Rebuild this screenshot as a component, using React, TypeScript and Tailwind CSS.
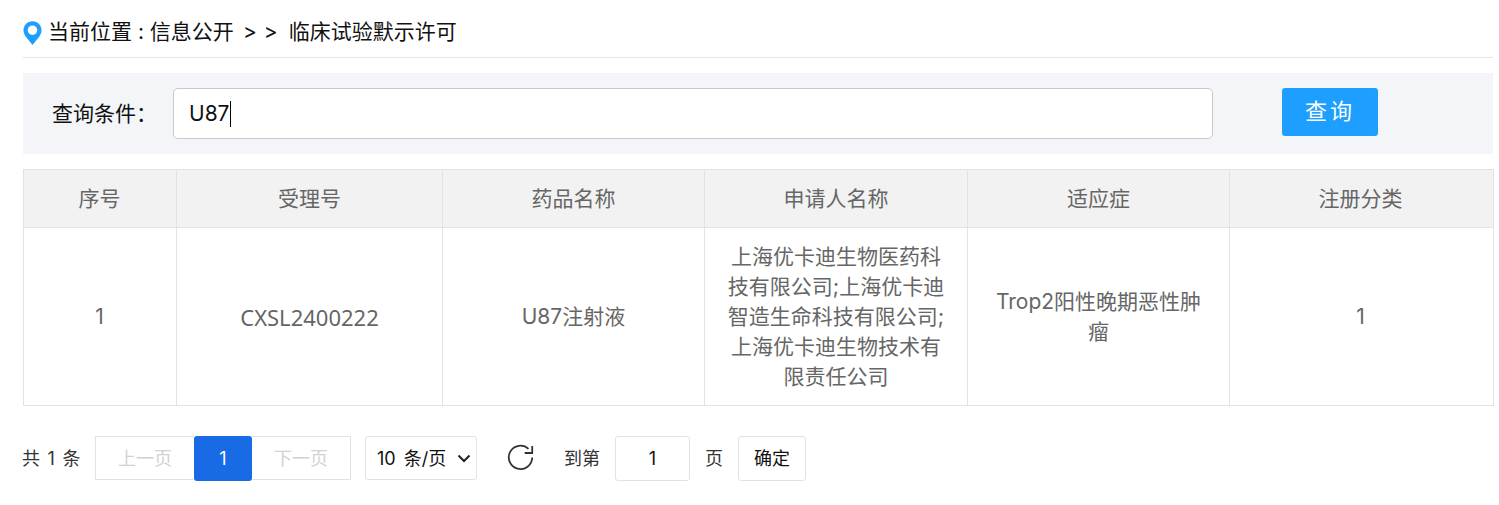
import React from 'react';

const FONT = "font-['Inter','Noto_Sans_CJK_SC',sans-serif]";

const columns = [
  { title: '序号', width: 'w-[153px]', pad: 'pr-px' },
  { title: '受理号', width: 'w-[266px]', pad: '' },
  { title: '药品名称', width: 'w-[262px]', pad: '' },
  { title: '申请人名称', width: 'w-[263px]', pad: '' },
  { title: '适应症', width: 'w-[262px]', pad: '' },
  { title: '注册分类', width: 'w-[264px]', pad: 'pr-[2px]' },
];

const PinIcon = () => (
  <svg width="19" height="26" viewBox="0 0 20 26" className="shrink-0 mt-[1px]">
    <path
      d="M10 .5C4.700.5.500 4.700.500 10c0 3.200 1.500 5.600 3.500 8.200L10 25.500l6-7.300c2-2.600 3.500-5 3.500-8.200C19.500 4.700 15.300.5 10 .5z"
      fill="#1e9fff"
    />
    <circle cx="10" cy="10" r="5" fill="#fff" />
  </svg>
);

const RefreshIcon = () => (
  <svg width="28" height="28" viewBox="0 0 28 28" fill="none" stroke="#333" strokeWidth="1.800">
    <path d="M25.200 13.500a11.700 11.700 0 1 1-3.700-8.700" />
    <path d="M25.200 2v7h-7.500" />
  </svg>
);

export default function App() {
  return (
    <div className={`${FONT} w-[1499px] h-[505px] bg-white pl-[23px] pr-[6px] overflow-hidden`}>
      {/* breadcrumb */}
      <div className="h-[58px] pt-[19px] border-b border-[#e6e6e6] flex items-start text-[21px] leading-[26px] text-[#111]">
        <PinIcon />
        <span className="ml-[6px] whitespace-pre">
          当前位置 : 信息公开
          <span className="ml-[9px]">&gt;</span>
          <span className="ml-[7px]">&gt;</span>
          <span className="ml-[11px]">临床试验默示许可</span>
        </span>
      </div>

      {/* search */}
      <div className="mt-[15px] h-[81px] bg-[#f4f5f9] flex items-start pt-[15px]">
        <label className="ml-[29px] w-[121px] h-[51px] flex items-center text-[21px] text-[#111]">查询条件：</label>
        <div className="w-[1040px] h-[51px] bg-white border border-[#c9c9c9] rounded-[5px] flex items-center pl-[15px] text-[21px] text-[#111]">
          U87<span className="w-px h-[26px] bg-black" />
        </div>
        <button className="ml-[69px] w-[96px] h-[48px] pb-[2px] rounded-[3px] bg-[#1e9fff] text-white text-[22px] tracking-[3px]">查询</button>
      </div>

      {/* table */}
      <table className="mt-[15px] w-[1470px] table-fixed border-collapse text-[21px] text-[#666] text-center">
        <colgroup>
          {columns.map((c) => (
            <col key={c.title} className={c.width} />
          ))}
        </colgroup>
        <thead>
          <tr className="h-[58px] bg-[#f2f2f2]">
            {columns.map((c) => (
              <th key={c.title} className={`border border-[#e2e2e2] font-normal ${c.pad}`}>{c.title}</th>
            ))}
          </tr>
        </thead>
        <tbody>
          <tr className="h-[178px] leading-[30px]">
            <td className="border border-[#e2e2e2] pr-px">1</td>
            <td className="border border-[#e2e2e2] font-['Noto_Sans',sans-serif] text-[22px]">CXSL2400222</td>
            <td className="border border-[#e2e2e2]">U87注射液</td>
            <td className="border border-[#e2e2e2] px-[21px]">上海优卡迪生物医药科技有限公司;上海优卡迪智造生命科技有限公司;上海优卡迪生物技术有限责任公司</td>
            <td className="border border-[#e2e2e2] px-[25px]">Trop2阳性晚期恶性肿瘤</td>
            <td className="border border-[#e2e2e2] pr-[2px]">1</td>
          </tr>
        </tbody>
      </table>

      {/* pagination */}
      <div className="mt-[30px] flex items-start h-[45px] text-[18px] text-[#333]">
        <span className="w-[72px] h-[44px] flex items-center -ml-px whitespace-pre [word-spacing:2.5px]">共 1 条</span>
        <div className="ml-px flex items-start">
          <span className="w-[99px] h-[44px] flex items-center justify-center border border-r-0 border-[#e2e2e2] text-[#d2d2d2]">上一页</span>
          <span className="w-[58px] h-[45px] flex items-center justify-center bg-[#196ae5] rounded-[3px] text-white">1</span>
          <span className="w-[99px] h-[44px] flex items-center justify-center border border-l-0 border-[#e2e2e2] text-[#d2d2d2]">下一页</span>
        </div>
        <div className="ml-[14px] w-[112px] h-[44px] border border-[#e2e2e2] rounded-[3px] flex items-center justify-between pl-[11px] pr-[5px] text-[#111]">
          <span className="whitespace-pre [word-spacing:3px]">10 条/页</span>
          <svg width="14" height="9" viewBox="0 0 14 9" fill="none" stroke="#222" strokeWidth="2"><path d="M1.500 1.500 7 7l5.500-5.500" /></svg>
        </div>
        <span className="ml-[30px] h-[44px] flex items-center"><RefreshIcon /></span>
        <span className="ml-[29px] h-[44px] flex items-center">到第</span>
        <span className="ml-[15px] w-[75px] h-[45px] border border-[#e2e2e2] rounded-[3px] flex items-center justify-center text-[#111]">1</span>
        <span className="ml-[15px] h-[44px] flex items-center">页</span>
        <span className="ml-[15px] w-[68px] h-[45px] border border-[#e2e2e2] rounded-[3px] flex items-center justify-center text-[#111]">确定</span>
      </div>
    </div>
  );
}
